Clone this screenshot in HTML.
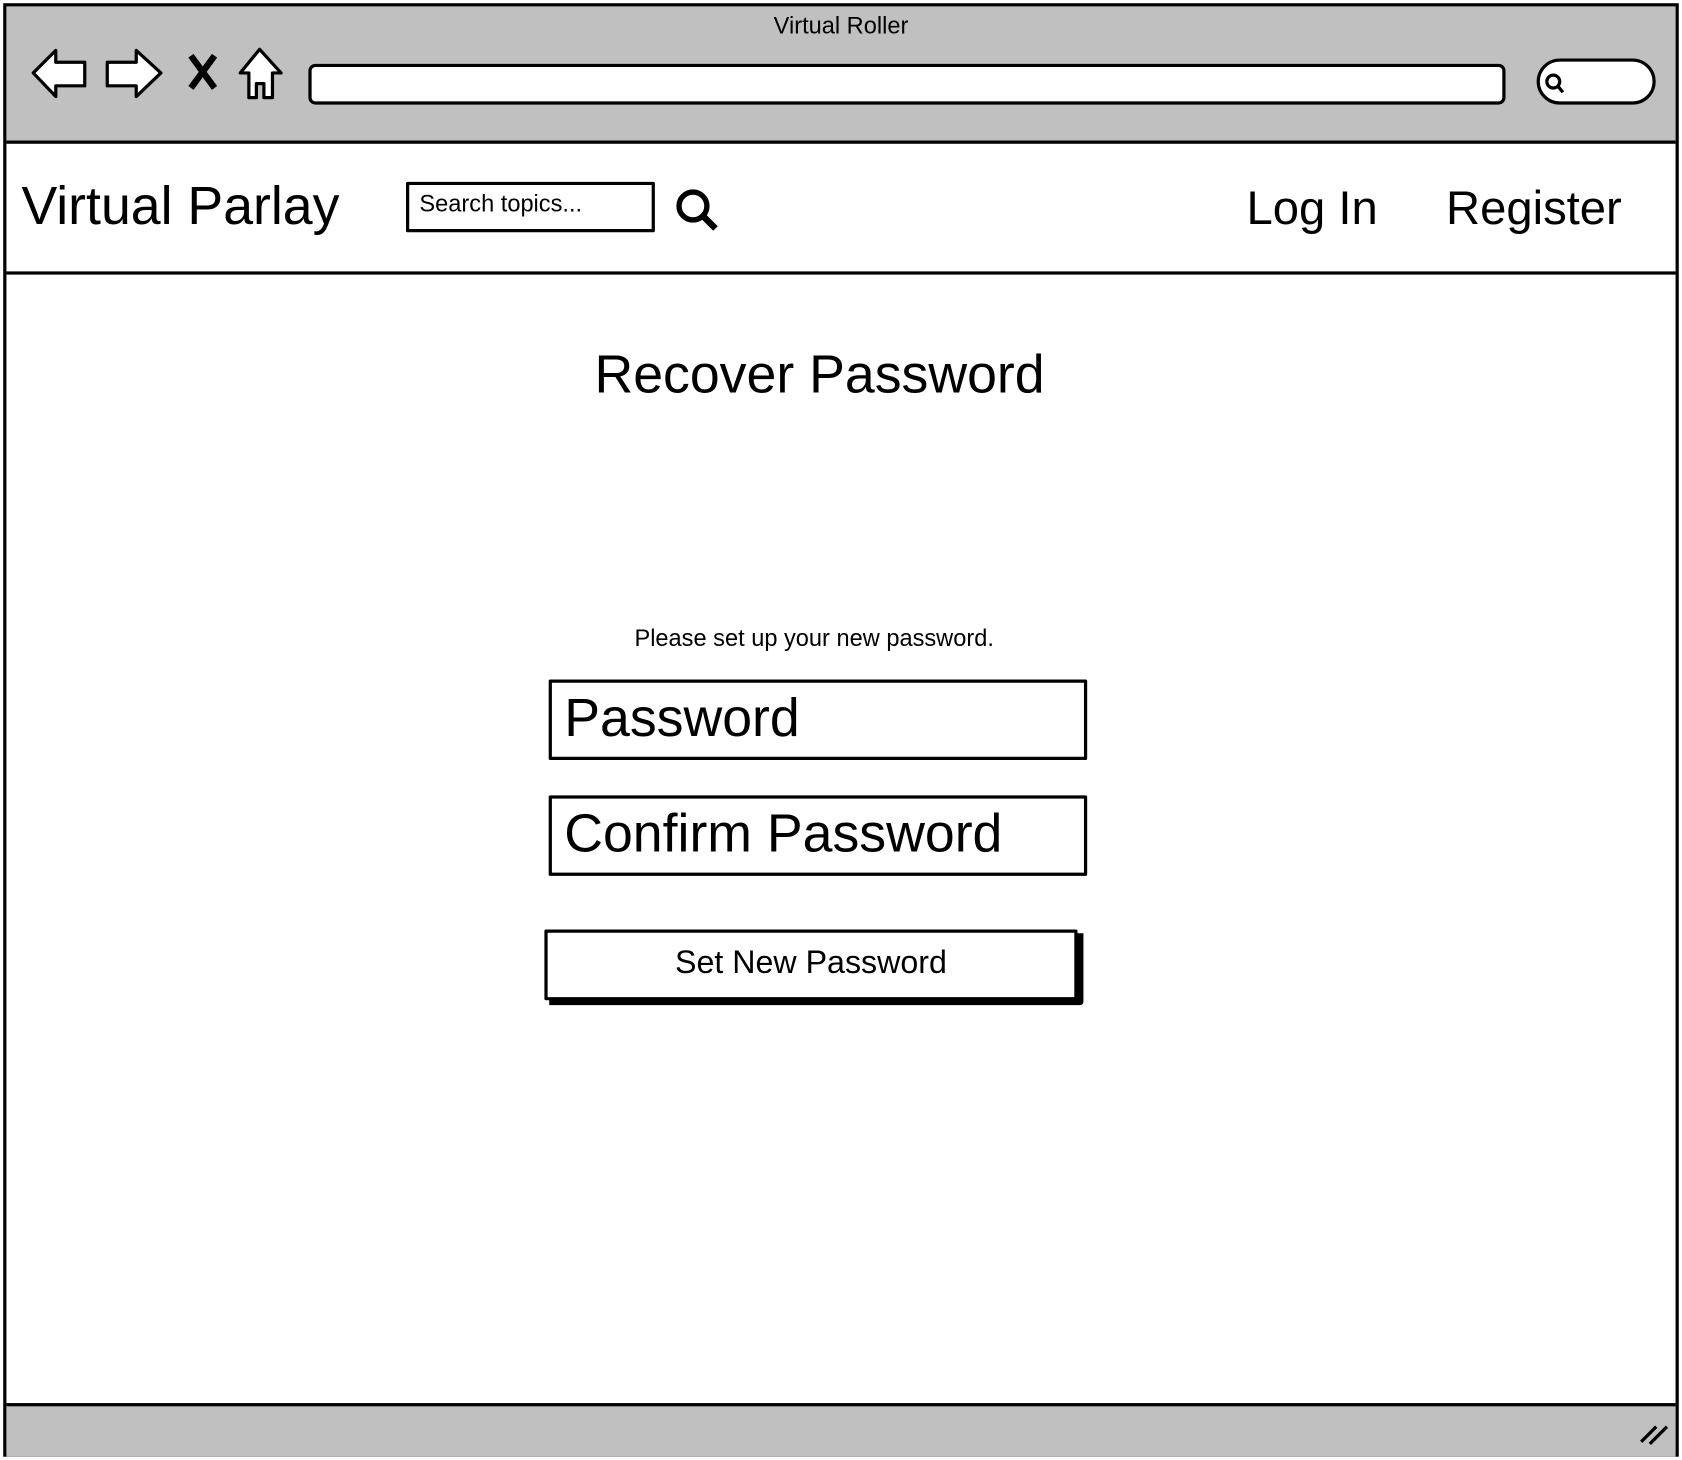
<!DOCTYPE html>
<html><head><style>
html,body{margin:0;padding:0;background:#fff;overflow:hidden}
#w{position:absolute;left:0;top:0;width:1568px;height:1361px;transform:scale(1.0727);transform-origin:0 0;font-family:"Liberation Sans",sans-serif;color:#000}
.a{position:absolute}
</style></head><body><div id="w">
<div class="a" style="left:3px;top:3px;width:1556px;height:1349px;border:3px solid #000;background:#fff"></div>
<div class="a" style="left:6px;top:6px;width:1556px;height:125px;background:#c0c0c0;border-bottom:3px solid #000"></div>
<div class="a" style="left:6px;top:253px;width:1556px;height:3px;background:#000"></div>
<div class="a" style="left:6px;top:1308px;width:1556px;height:47px;background:#c0c0c0;border-top:3px solid #000"></div>
<div class="a" style="left:0;top:11px;width:1568px;text-align:center;font-size:22px">Virtual Roller</div>
<svg class="a" style="left:0;top:0" width="1568" height="1361" fill="none" stroke="#000" stroke-width="3" stroke-linejoin="round">
<path d="M31 68 L52 47 L52 58 L79 58 L79 80 L52 80 L52 90 Z" fill="#fff"/>
<path d="M150 68 L127 47 L127 58 L100 58 L100 80 L127 80 L127 90 Z" fill="#fff"/>
<path d="M178 52 L200 82 M200 52 L178 82" stroke-width="6"/>
<path d="M242 46 L224 68 L232 68 L232 91 L239 91 L239 78 L246 78 L246 91 L254 91 L254 68 L262 68 Z" fill="#fff"/>
<rect x="289" y="61" width="1113" height="35" rx="5" fill="#fff"/>
<rect x="1434" y="56" width="108" height="40" rx="20" fill="#fff"/>
<circle cx="1448" cy="76" r="6"/><path d="M1452 80 L1457 86"/>
<rect x="380" y="171" width="229" height="44" fill="#fff"/>
<circle cx="646" cy="192" r="13" stroke-width="5"/><path d="M656 202 L667 213" stroke-width="6"/>
<rect x="513" y="635" width="499" height="72" fill="#fff"/>
<rect x="513" y="743" width="499" height="72" fill="#fff"/>
<path d="M512 934 L1007 934 L1007 870" stroke-width="6"/>
<rect x="509" y="868" width="494" height="63" fill="#fff"/>
<path d="M1530 1344 L1544 1330 M1538 1346 L1554 1330"/>
</svg>
<div class="a" style="left:20px;top:163px;font-size:50px">Virtual Parlay</div>
<div class="a" style="left:391px;top:177px;font-size:22px">Search topics...</div>
<div class="a" style="left:1162px;top:170px;font-size:44px">Log In</div>
<div class="a" style="left:1348px;top:170px;font-size:44px">Register</div>
<div class="a" style="left:0;top:320px;width:1528px;text-align:center;font-size:50px">Recover Password</div>
<div class="a" style="left:0;top:582px;width:1518px;text-align:center;font-size:22px">Please set up your new password.</div>
<div class="a" style="left:526px;top:640px;font-size:50px">Password</div>
<div class="a" style="left:526px;top:748px;font-size:50px">Confirm Password</div>
<div class="a" style="left:509px;top:881px;width:494px;text-align:center;font-size:30px">Set New Password</div>
</div></body></html>
